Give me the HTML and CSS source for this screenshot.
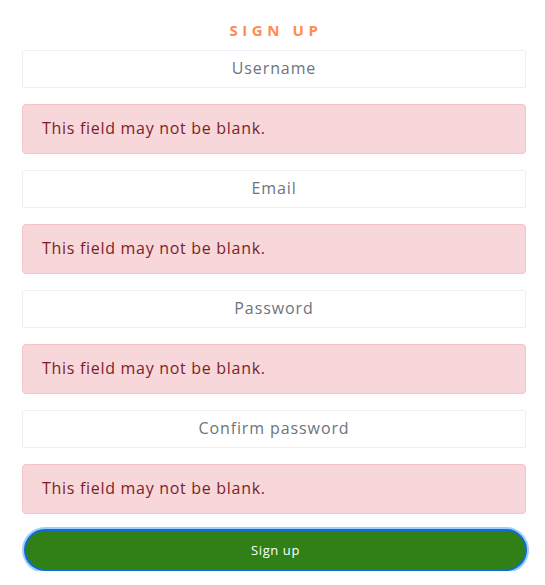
FILE: index.html
```html
<!DOCTYPE html>
<html>
<head>
<meta charset="utf-8">
<link rel="stylesheet" href="styles.css">
</head>
<body>
<div class="form">
  <h1 class="title">SIGN UP</h1>
  <input class="field" type="text" placeholder="Username">
  <div class="alert">This field may not be blank.</div>
  <input class="field" type="email" placeholder="Email">
  <div class="alert">This field may not be blank.</div>
  <input class="field" type="password" placeholder="Password">
  <div class="alert">This field may not be blank.</div>
  <input class="field" type="password" placeholder="Confirm password">
  <div class="alert">This field may not be blank.</div>
  <button class="submit" type="button">Sign up</button>
</div>
</body>
</html>
```
FILE: styles.css
```css
* { box-sizing: border-box; }
body {
  margin: 0;
  background: #fff;
  font-family: "Open Sans", sans-serif;
}
.form {
  width: 504px;
  margin-left: 22px;
  padding-top: 19px;
  display: flex;
  flex-direction: column;
}
.title {
  margin: 0 0 0 4px;
  height: 31px;
  text-align: center;
  color: #ff8c4f;
  font-size: 15px;
  font-weight: 700;
  letter-spacing: 4.6px;
  line-height: 22px;
}
.field {
  height: 38px;
  border: 1px solid #ededf5;
  border-radius: 2px;
  text-align: center;
  font-family: inherit;
  font-size: 16px;
  letter-spacing: 0.9px;
  color: #495057;
  padding-bottom: 3px;
  margin-bottom: 16px;
}
.field::placeholder { color: #6c757d; }
.alert {
  height: 50px;
  background: #f8d7da;
  border: 1px solid #f5c2c7;
  border-radius: 4px;
  color: #7d1d28;
  font-size: 16px;
  letter-spacing: 0.7px;
  line-height: 22px;
  padding: 12px 19px;
  margin-bottom: 16px;
}
.submit {
  margin: -1px 0 0 2px;
  width: 503px;
  height: 42px;
  border: 2px solid #0b6fd6;
  border-radius: 21px;
  background: #307f17;
  color: #fff;
  font-family: inherit;
  font-size: 13px;
  letter-spacing: 0.6px;
  box-shadow: 0 0 0 2px #a3cdff;
}
```
